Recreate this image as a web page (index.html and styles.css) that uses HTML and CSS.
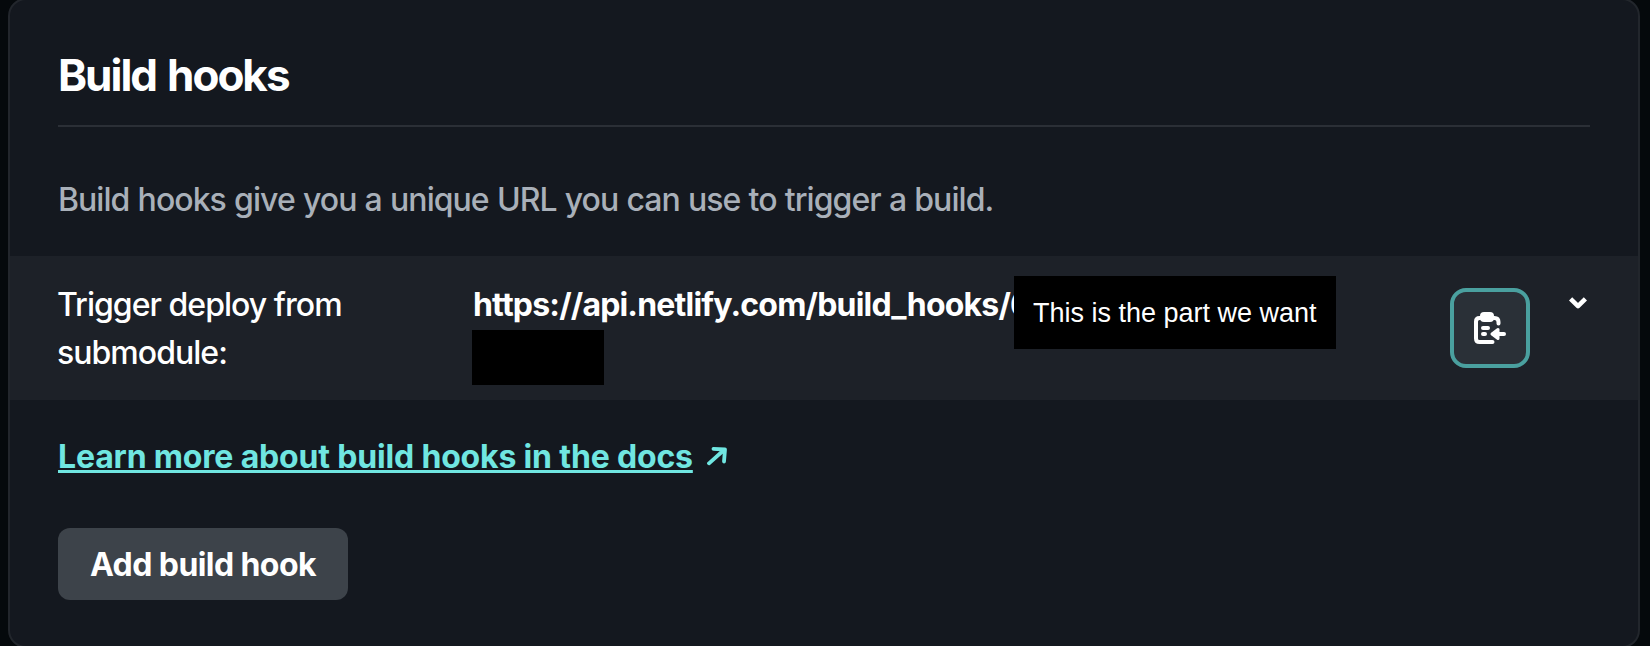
FILE: index.html
```html
<!DOCTYPE html>
<html lang="en">
<head>
<meta charset="utf-8">
<title>Build hooks</title>
<link rel="stylesheet" href="styles.css">
</head>
<body>
<section class="card">
  <h2 class="card-title">Build hooks</h2>
  <p class="intro">Build hooks give you a unique URL you can use to trigger a build.</p>
  <div class="hook">
    <div class="hook-name">Trigger deploy from submodule:</div>
    <div class="hook-url">https://api.netlify.com/build_hooks/6
      <span class="mask mask-note">This is the part we want</span>
      <span class="mask mask-rest"></span>
    </div>
    <button class="copy" aria-label="Copy to clipboard">
      <svg width="32" height="32" viewBox="0 0 32 32" fill="none" stroke="#fff" stroke-width="4" stroke-linecap="round" stroke-linejoin="round">
        <path d="M6 6H5.500Q2 6 2 9.500V26.500Q2 30 5.500 30H18.500M20 6H20.500Q24.500 6 24.500 10V11.500"/>
        <rect x="6" y="0" width="14" height="10" rx="4" fill="#fff" stroke="none"/>
        <path d="M9 16H14M9 22H11M22 22H30"/>
        <path d="M18 22L24 17.500V26.500Z" fill="#fff" stroke-width="3"/>
      </svg>
    </button>
    <button class="toggle" aria-label="Expand">
      <svg width="18" height="12" viewBox="0 0 18 12" fill="none" stroke="#fff" stroke-width="4.600"><path d="M1.600 1.900L9 9.100L16.400 1.900" stroke-linejoin="round"/></svg>
    </button>
  </div>
  <div class="docs">
    <a class="docs-link" href="#">Learn more about build hooks in the docs</a>
    <svg class="docs-arrow" width="20" height="19" viewBox="0 0 20 19" fill="none" stroke="#70e6e1" stroke-width="3.800" stroke-linecap="round" stroke-linejoin="round"><path d="M2 16.300L17.500 2.500M6.500 1.900L18 2.500L17 14.500"/></svg>
  </div>
  <button class="add">Add build hook</button>
</section>
</body>
</html>
```
FILE: styles.css
```css
* { box-sizing: border-box; }
body {
  margin: 0;
  height: 646px;
  overflow: hidden;
  background: #05090c;
  color: #fff;
  font: 450 32px/48px Inter, "Liberation Sans", sans-serif;
}
button { border: 0; padding: 0; color: inherit; font: inherit; }
.card {
  width: 1632px;
  height: 650px;
  margin: -2px 0 0 8px;
  padding-top: 47px;
  background: #14181f;
  border: 2px solid #22262c;
  border-radius: 18px;
}
.card-title {
  margin: 0 48px;
  height: 80px;
  border-bottom: 2px solid #2b2f36;
  font-size: 44px;
  line-height: 56px;
  font-weight: 700;
  letter-spacing: -2px;
  word-spacing: 2.5px;
}
.intro {
  margin: 49px 48px 32px;
  color: #a9b0b9;
  letter-spacing: -0.95px;
  word-spacing: 0.6px;
}
.hook {
  display: flex;
  height: 144px;
  padding: 25px 50px 23px 48px;
  background: #1d2128;
}
.hook-name { width: 415px; padding-right: 90px; margin-left: -1px; margin-right: 1px; letter-spacing: -0.97px; }
.hook-url {
  position: relative;
  width: 977px;
  white-space: nowrap;
  font-weight: 650;
  letter-spacing: -0.81px;
}
.mask { position: absolute; background: #000; }
.mask-note {
  left: 541px;
  top: -5px;
  width: 322px;
  height: 73px;
  padding-left: 19px;
  font: 400 27px/74px "Liberation Sans", sans-serif;
  letter-spacing: 0;
}
.mask-rest { left: -1px; top: 49px; width: 132px; height: 55px; }
.copy {
  display: flex;
  align-items: center;
  justify-content: center;
  width: 80px;
  height: 80px;
  margin-top: 7px;
  background: #2a3037;
  border: 4px solid #4aa09f;
  border-radius: 16px;
}
.toggle { height: 12px; margin: 16px 0 0 39px; background: none; display: flex; }
.docs {
  display: flex;
  align-items: center;
  gap: 14px;
  margin: 33px 48px 47px;
  color: #70e6e1;
}
.docs-link {
  color: inherit;
  font-weight: 700;
  letter-spacing: -0.17px;
  text-decoration: underline;
  text-decoration-thickness: 3px;
  text-underline-offset: 2px;
  text-decoration-skip-ink: none;
}
.docs-arrow { margin-bottom: 2px; }
.add {
  display: block;
  width: 290px;
  height: 72px;
  padding-top: 2px;
  margin-left: 48px;
  background: #3d434a;
  border-radius: 12px;
  font-weight: 700;
  letter-spacing: -0.58px;
}
```
